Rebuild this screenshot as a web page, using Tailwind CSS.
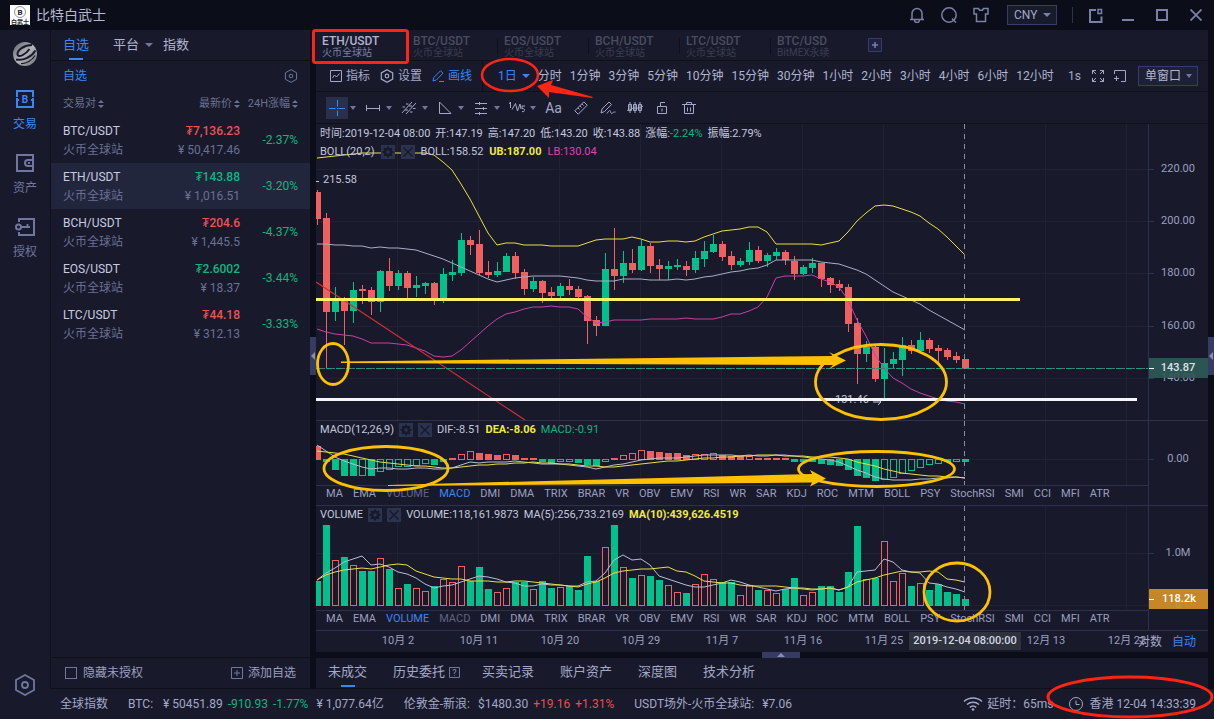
<!DOCTYPE html>
<html lang="zh-CN">
  <head>
    <meta charset="UTF-8" />
    <meta name="viewport" content="width=device-width, initial-scale=1.0" />
    <title>比特白武士</title>
    <script src="https://cdn.jsdelivr.net/npm/@tailwindcss/browser@4"></script>
  </head>
  <body class="relative flex flex-col h-screen overflow-hidden bg-[#0b0e19] text-[#a3a8c8] text-xs font-['Roboto','Noto_Sans_CJK_SC',sans-serif]">
    <header class="flex items-center h-[30px] shrink-0 pl-2.5 pr-3 text-[#7a80a6]">
      <svg class="w-5 h-5 bg-white" viewBox="0 0 20 20" fill="none" stroke="#33363f">
        <circle cx="10" cy="7" r="5.5" stroke="#8d93a0" />
        <text x="10" y="10" text-anchor="middle" font-size="8" font-weight="700" fill="#22252e" stroke="none">B</text>
        <text x="10" y="18.5" text-anchor="middle" font-size="6" font-weight="700" fill="#22252e" stroke="none">白武士</text>
      </svg>
      <h1 class="ml-1.5 text-sm leading-5 text-[#b4b8d2]">比特白武士</h1>
      <div class="flex items-center ml-auto">
        <button aria-label="通知" class="mr-4">
          <svg class="w-4 h-4" viewBox="0 0 16 16" fill="none" stroke="currentColor" stroke-width="1.5"><path d="M1 12.5h14M3 12V6.5a5 5 0 0 1 10 0V12M5.5 13a2.5 2.5 0 0 0 5 0" /></svg>
        </button>
        <button aria-label="客服" class="mr-4">
          <svg class="w-4 h-4" viewBox="0 0 16 16" fill="none" stroke="currentColor" stroke-width="1.5"><circle cx="8" cy="8" r="7.2" /><path d="M11 11.500l4 4" /></svg>
        </button>
        <button aria-label="皮肤" class="mr-[18px]">
          <svg class="w-4 h-4" viewBox="0 0 16 16" fill="none" stroke="currentColor" stroke-width="1.5"><path d="M1 1.500h4.500l1 1.700h3l1-1.700H15V7h-2.500v7.500h-9V7H1z" /></svg>
        </button>
        <div class="relative">
          <select aria-label="货币" class="appearance-none block w-[50px] h-5 pl-1.5 border border-[#363d6b] bg-[#171b2c] text-xs leading-[18px] text-[#a3a8c8]"><option>CNY</option></select>
          <svg class="absolute right-1.5 top-2 w-2 h-1 pointer-events-none" viewBox="0 0 8 4"><path d="M0 0h8L4 4z" fill="currentColor" /></svg>
        </div>
        <span class="w-px h-4 mx-[15px] bg-[#2b3150]"></span>
        <button aria-label="布局" class="mr-[19px]">
          <svg class="w-[15px] h-[15px]" viewBox="0 0 15 15" fill="none" stroke="currentColor" stroke-width="2"><path d="M8 2H2v12h11.500V8.500" /><path d="M10 1.500h3.500v4H10z" stroke-width="1.500" /></svg>
        </button>
        <button aria-label="最小化" class="mr-[22px]">
          <svg class="w-3 h-3" viewBox="0 0 12 12"><path d="M0 10h12v2H0z" fill="currentColor" /></svg>
        </button>
        <button aria-label="最大化" class="mr-[22px]">
          <svg class="w-3 h-3" viewBox="0 0 12 12" fill="none" stroke="currentColor" stroke-width="2"><path d="M1 1h10v10H1z" /></svg>
        </button>
        <button aria-label="关闭">
          <svg class="w-3 h-3" viewBox="0 0 12 12" fill="none" stroke="currentColor" stroke-width="1.800"><path d="M.5.500l11 11M11.500.500l-11 11" /></svg>
        </button>
      </div>
    </header>

    <div class="flex flex-1 min-h-0">
      <!-- left rail -->
      <nav class="flex flex-col items-center w-[50px] shrink-0 pt-3 pb-[23px] bg-[#181a2b] text-[#6f76a0]">
        <svg class="w-6 h-6 shrink-0" viewBox="0 0 24 24" fill="none" stroke="#181a2b">
          <defs><linearGradient id="ball" x1="0" y1="0" x2="1" y2="1"><stop offset="0" stop-color="#5d606a" /><stop offset=".5" stop-color="#b4b5ba" /><stop offset="1" stop-color="#6d7079" /></linearGradient></defs>
          <circle cx="12" cy="12" r="12" fill="url(#ball)" stroke="none" />
          <path d="M19 3C11 3 4 8 4.500 12.500c.5 3.500 8 .5 12-5.500" stroke-width="2" />
          <path d="M3 17.500c7 1.500 15-2 19.500-9" stroke-width="2" />
          <path d="M8 21.500c5 .5 11-3 14-8" stroke-width="1.200" />
        </svg>
        <a href="#" class="flex flex-col items-center mt-6 text-[#3c86f0]">
          <svg class="w-[18px] h-[18px]" viewBox="0 0 18 18" fill="none" stroke="currentColor" stroke-width="2"><path d="M1 7V1h16v6M1 11v6h16v-6M1 8v2h2M17 8v2h-2" /><text x="9" y="13" text-anchor="middle" font-size="10" font-weight="700" fill="currentColor" stroke="none">B</text></svg>
          <span class="mt-2 leading-4">交易</span>
        </a>
        <a href="#" class="flex flex-col items-center mt-[22px]">
          <svg class="w-[18px] h-[18px]" viewBox="0 0 18 18" fill="none" stroke="currentColor" stroke-width="2"><path d="M17 1H1v16h16zM17 6h-5a3 3 0 0 0 0 6h5" /><path d="M12 9h2" /></svg>
          <span class="mt-2 leading-4">资产</span>
        </a>
        <a href="#" class="flex flex-col items-center mt-[22px]">
          <svg class="w-5 h-[18px]" viewBox="0 0 20 18" fill="none" stroke="currentColor" stroke-width="2"><path d="M4 4V1h15v16H4v-3" /><circle cx="3.500" cy="9" r="2.500" /><path d="M6 9h9M12.500 9V6" stroke-width="1.800" /></svg>
          <span class="mt-2 leading-4">授权</span>
        </a>
        <button aria-label="设置" class="mt-auto">
          <svg class="w-5 h-[22px]" viewBox="0 0 20 22" fill="none" stroke="currentColor" stroke-width="1.800"><path d="M10 1l9 5v10l-9 5-9-5V6z" /><circle cx="10" cy="11" r="3" /></svg>
        </button>
      </nav>

      <div class="flex flex-col flex-1 min-w-0">
        <div class="flex flex-1 min-h-0">
          <!-- watchlist -->
          <aside class="flex flex-col w-[260px] shrink-0 bg-[#181a2b] border-l border-[#0e101c]">
            <nav class="flex h-[31px] shrink-0 pl-3 border-b border-[#0e101c] text-[13px] leading-[30px] text-[#b0b4d0]">
              <a href="#" class="relative text-[#3c86f0]">自选<span class="absolute left-1.5 bottom-0 w-3.5 h-0.5 bg-[#3c86f0]"></span></a>
              <a href="#" class="flex items-center ml-6">平台<svg class="ml-1.5 w-2 h-1" viewBox="0 0 8 4"><path d="M0 0h8L4 4z" fill="#6f76a0" /></svg></a>
              <a href="#" class="ml-2.5">指数</a>
            </nav>
            <div class="flex items-center justify-between h-7 shrink-0 px-3 pt-0.5">
              <h2 class="leading-4 text-[#3c86f0]">自选</h2>
              <button aria-label="自选设置" class="text-[#6f76a0]"><svg class="w-3.5 h-3.5" viewBox="0 0 14 14" fill="none" stroke="currentColor"><path d="M7 .6l5.600 3.200v6.400L7 13.400l-5.600-3.200V3.800z" /><circle cx="7" cy="7" r="1.800" /></svg></button>
            </div>
            <table class="w-full table-fixed text-[#6a7094]">
              <colgroup><col /><col class="w-[90px]" /><col class="w-[70px]" /></colgroup>
              <thead>
                <tr class="h-7 text-[11px] leading-4">
                  <th class="p-0 pt-0.5 pl-3 text-left font-normal"><button class="inline-flex items-center gap-0.5">交易对<svg class="w-1.5 h-2" viewBox="0 0 6 8" fill="currentColor"><path d="M0 3h6L3 0zM0 5h6L3 8z" /></svg></button></th>
                  <th class="p-0 pt-0.5 text-right font-normal"><button class="inline-flex items-center gap-0.5">最新价<svg class="w-1.5 h-2" viewBox="0 0 6 8" fill="currentColor"><path d="M0 3h6L3 0zM0 5h6L3 8z" /></svg></button></th>
                  <th class="p-0 pt-0.5 pr-3 text-right font-normal whitespace-nowrap"><button class="inline-flex items-center gap-0.5">24H涨幅<svg class="w-1.5 h-2" viewBox="0 0 6 8" fill="currentColor"><path d="M0 3h6L3 0zM0 5h6L3 8z" /></svg></button></th>
                </tr>
              </thead>
              <tbody id="watchlist"></tbody>
            </table>
            <div class="flex items-center justify-between h-8 shrink-0 mt-auto px-3.5 border-y border-[#0e101c] leading-4 text-[#9a9fc0]">
              <label class="flex items-center gap-1.5"><input type="checkbox" class="appearance-none w-3 h-3 border border-[#6f76a0]" />隐藏未授权</label>
              <button class="flex items-center gap-[5px]"><svg class="w-3 h-3" viewBox="0 0 12 12" fill="none" stroke="#6f76a0"><path d="M.5.500h11v11H.5zM3 6h6M6 3v6" /></svg>添加自选</button>
            </div>
          </aside>

          <div class="flex items-center w-1.5 shrink-0 pb-2">
            <button aria-label="收起自选" class="flex items-center justify-center w-1.5 h-[38px] bg-[#363b61]"><svg class="w-1 h-2" viewBox="0 0 4 8"><path d="M4 0v8L0 4z" fill="#8a8fb0" /></svg></button>
          </div>

          <main class="flex flex-col flex-1 min-w-0">
            <!-- market tabs -->
            <nav class="flex h-[31px] shrink-0 bg-[#181a2b] border-b border-[#0e101c] text-[#484c5f]" id="markets"></nav>

            <div class="flex items-center h-[31px] shrink-0 pl-3.5 pr-2.5 bg-[#181a2b] border-b border-[#0e101c] leading-4 whitespace-nowrap text-[#a3a8c8]">
              <button class="flex items-center gap-1"><svg class="w-3 h-3" viewBox="0 0 12 12" fill="none" stroke="currentColor"><path d="M.5.500h11v11H.5zM2.500 8l2-3 2 2 3-3.500" /></svg>指标</button>
              <button class="flex items-center gap-1 ml-2.5"><svg class="w-3.5 h-3.5" viewBox="0 0 14 14" fill="none" stroke="currentColor" stroke-width="1.200"><path d="M7 .7l5.700 3.200v6.200L7 13.300l-5.700-3.200V3.900z" /><circle cx="7" cy="7" r="1.800" /></svg>设置</button>
              <button class="flex items-center gap-1 ml-2.5 text-[#3c86f0]"><svg class="w-3 h-3" viewBox="0 0 12 12" fill="none" stroke="currentColor"><path d="M1 11l.8-3.500L8.500.8 11 3.200 4.300 10zM7 11.500h5" /></svg>画线</button>
              <span class="w-px h-[30px] ml-2.5 mr-[15px] bg-[#0e101c]"></span>
              <button class="flex items-center gap-[5px] mr-2 text-[#3c86f0]">1日<svg class="w-2 h-1" viewBox="0 0 8 4"><path d="M0 0h8L4 4z" fill="currentColor" /></svg></button>
              <div class="flex gap-2 text-[#b0b4d0]">
                <button>分时</button><button>1分钟</button><button>3分钟</button><button>5分钟</button><button>10分钟</button><button>15分钟</button><button>30分钟</button><button>1小时</button><button>2小时</button><button>3小时</button><button>4小时</button><button>6小时</button><button>12小时</button>
              </div>
              <span class="ml-auto">1s</span>
              <button aria-label="全屏" class="ml-[11px]"><svg class="w-3 h-3" viewBox="0 0 12 12" fill="none" stroke="currentColor"><path d="M.5 4V.5H4M.5.500l3.500 3.500M8 .5h3.500V4M11.500.500L8 4M.5 8v3.500H4M.5 11.500L4 8M11.500 8v3.500H8M11.500 11.500L8 8" /></svg></button>
              <button aria-label="新窗口" class="ml-2.5"><svg class="w-3 h-3" viewBox="0 0 12 12" fill="none" stroke="currentColor"><path d="M.5 4V.5h11v11H7M0 8.500h5M2.500 6v5" /></svg></button>
              <div class="relative ml-3">
                <select aria-label="窗口" class="appearance-none block w-[60px] h-5 pl-1.5 border border-[#363d6b] bg-[#1e2135] text-xs leading-[18px] text-[#b0b4d0]"><option>单窗口</option></select>
                <svg class="absolute right-1.5 top-2 w-1.5 h-1 pointer-events-none" viewBox="0 0 6 4"><path d="M0 0h6L3 4z" fill="#6f76a0" /></svg>
              </div>
            </div>

            <!-- drawing tools -->
            <div class="flex items-center h-8 shrink-0 pl-2.5 bg-[#181a2b] border-b border-[#0e101c] text-[#a3a8c8]">
              <div class="flex -mr-0.5" id="tools"></div>
              <button aria-label="文字" class="w-[27px] text-sm leading-5">Aa</button>
              <button aria-label="尺子" class="flex justify-center w-[27px]"><svg class="w-3.5 h-3.5" viewBox="0 0 14 14" fill="none" stroke="currentColor"><path d="M.8 9.800l9-9 3.400 3.400-9 9zM4 7l1.500 1.500M6 5l1.500 1.500M8 3l1.500 1.500" /></svg></button>
              <button aria-label="画笔" class="flex justify-center w-[27px]"><svg class="w-4 h-3.5" viewBox="0 0 16 14" fill="none" stroke="currentColor"><path d="M1 12l1-4 7-7 2.500 2.500-7 7zM7 12.500c2-3 3-4 3.500-2s1 2.500 2 1.500 1.500-1 3-1" /></svg></button>
              <button aria-label="K线样式" class="flex justify-center w-[27px]"><svg class="w-4 h-3.5" viewBox="0 0 16 14" fill="none" stroke="currentColor"><path d="M1.500 3.500h3v6h-3zM6.500 3.500h3v6h-3zM11.500 3.500h3v6h-3zM3 1v11M8 1v11M13 1v11M0 9c2 2 4-2 7-2s5 1 9-2" /></svg></button>
              <button aria-label="锁定" class="flex justify-center w-[27px]"><svg class="w-2.5 h-3" viewBox="0 0 10 12" fill="none" stroke="currentColor"><path d="M.5 4.500h9v7h-9zM3.500 4.500v-4H8M5 6.500v3" /></svg></button>
              <button aria-label="删除" class="flex justify-center w-[27px]"><svg class="w-3.5 h-3" viewBox="0 0 14 12" fill="none" stroke="currentColor"><path d="M0 2.500h14M4.500 2.500v-2h5v2M2.500 3v8.500h9V3M5.500 5.500v4M8.500 5.500v4" /></svg></button>
            </div>

            <!-- charts -->
            <section class="flex flex-col flex-1 min-h-0 bg-[#181a2b] text-[11px]">
              <div class="flex flex-1 min-h-0">
                <div class="relative flex-1 min-w-0 overflow-hidden">
                  <svg id="priceChart" class="block w-full h-full"></svg>
                  <div class="absolute top-0.5 left-1 flex gap-[5px] leading-4 whitespace-nowrap text-[#c3c7de]">
                    <span>时间:2019-12-04 08:00</span><span>开:147.19</span><span>高:147.20</span><span>低:143.20</span><span>收:143.88</span><span>涨幅:<span class="text-[#10b57f]">-2.24%</span></span><span>振幅:2.79%</span>
                  </div>
                  <div class="absolute top-5 left-1 flex items-center gap-1.5 leading-4 whitespace-nowrap text-[#c3c7de]" data-legend>
                    <span>BOLL(20,2)</span>
                    <span>BOLL:158.52</span><span class="font-bold text-[#f2ea3a]">UB:187.00</span><span class="text-[#d946b4]">LB:130.04</span>
                  </div>
                </div>
                <svg id="priceAxis" class="block w-[60px] h-full border-l border-[#2c3150]"></svg>
              </div>
              <div class="flex h-[65px] shrink-0 border-t border-[#2c3150]">
                <div class="relative flex-1 min-w-0 overflow-hidden">
                  <svg id="macdChart" class="block w-full h-full"></svg>
                  <div class="absolute top-px left-1 flex items-center gap-[5px] leading-4 whitespace-nowrap text-[#c3c7de]" data-legend>
                    <span>MACD(12,26,9)</span>
                    <span>DIF:-8.51</span><span class="font-bold text-[#f2ea3a]">DEA:-8.06</span><span class="text-[#10b57f]">MACD:-0.91</span>
                  </div>
                </div>
                <svg id="macdAxis" class="block w-[60px] h-full border-l border-[#2c3150]"></svg>
              </div>
              <div class="flex h-5 shrink-0">
                <nav class="flex items-start flex-1 gap-2.5 pl-2.5 border-t border-[#2c3150] leading-4 text-[#9a9fc0]" data-tabs="MACD"></nav>
                <div class="w-[60px] border-l border-[#2c3150]"></div>
              </div>
              <div class="flex h-[105px] shrink-0 border-t border-[#2c3150]">
                <div class="relative flex-1 min-w-0 overflow-hidden">
                  <svg id="volumeChart" class="block w-full h-full"></svg>
                  <div class="absolute top-px left-1 flex items-center gap-[5px] leading-4 whitespace-nowrap text-[#c3c7de]" data-legend>
                    <span>VOLUME</span>
                    <span>VOLUME:118,161.9873</span><span>MA(5):256,733.2169</span><span class="font-bold text-[#f2ea3a]">MA(10):439,626.4519</span>
                  </div>
                </div>
                <svg id="volumeAxis" class="block w-[60px] h-full border-l border-[#2c3150]"></svg>
              </div>
              <div class="flex h-5 shrink-0">
                <nav class="flex items-start flex-1 gap-2.5 pl-2.5 border-t border-[#2c3150] leading-4 text-[#9a9fc0]" data-tabs="VOLUME"></nav>
                <div class="w-[60px] border-l border-[#2c3150]"></div>
              </div>
              <div class="flex h-[22px] shrink-0 border-t border-[#2c3150]">
                <svg id="dateAxis" class="block flex-1 min-w-0 h-full overflow-visible"></svg>
                <div class="flex justify-between w-[70px] pr-3 text-xs leading-[22px]"><button>对数</button><button class="text-[#3c86f0]">自动</button></div>
              </div>
            </section>

            <div class="flex justify-center h-1.5 shrink-0 pl-[38px]">
              <button aria-label="展开" class="flex items-center justify-center w-[38px] h-1.5 bg-[#363b61]"><svg class="w-2 h-1" viewBox="0 0 8 4"><path d="M0 4h8L4 0z" fill="#8a8fb0" /></svg></button>
            </div>
            <nav class="flex gap-[26px] h-[31px] shrink-0 pl-3 bg-[#181a2b] border-b border-[#0e101c] text-[13px] leading-7 text-[#a3a8c8]">
              <a href="#" class="relative">未成交<span class="absolute left-[13px] bottom-px w-3.5 h-0.5 bg-[#3c86f0]"></span></a>
              <a href="#" class="flex items-center gap-1 h-7 -mr-1">历史委托<svg class="w-[11px] h-[11px]" viewBox="0 0 11 11" fill="none" stroke="#6f76a0"><path d="M.5.500h10v10H.5z" /><text x="5.500" y="9" text-anchor="middle" font-size="9" fill="#8a8fb0" stroke="none">?</text></svg></a>
              <a href="#">买卖记录</a>
              <a href="#">账户资产</a>
              <a href="#">深度图</a>
              <a href="#">技术分析</a>
            </nav>
          </main>

          <div class="flex items-center w-1.5 shrink-0 pb-2">
            <button aria-label="展开侧栏" class="flex items-center justify-center w-1.5 h-[38px] bg-[#363b61]"><svg class="w-1 h-2" viewBox="0 0 4 8"><path d="M4 0v8L0 4z" fill="#8a8fb0" /></svg></button>
          </div>
        </div>

        <footer class="flex items-center h-[30px] shrink-0 pl-2.5 pr-[18px] bg-[#181a2b] leading-4 whitespace-nowrap">
          <span class="mr-5">全球指数</span>
          <span class="mr-2.5">BTC:</span>
          <span class="mr-[5px]">¥ 50451.89</span>
          <span class="mr-[5px] text-[#10b57f]">-910.93</span>
          <span class="mr-2 text-[#10b57f]">-1.77%</span>
          <span class="mr-5">¥ 1,077.64亿</span>
          <span class="mr-2">伦敦金-新浪:</span>
          <span class="mr-[5px]">$1480.30</span>
          <span class="mr-[5px] text-[#e0524f]">+19.16</span>
          <span class="mr-5 text-[#e0524f]">+1.31%</span>
          <span class="mr-2">USDT场外-火币全球站:</span>
          <span>¥7.06</span>
          <svg class="ml-auto w-5 h-3.5" viewBox="0 0 20 14" fill="none" stroke="currentColor" stroke-width="1.500"><path d="M1 4.500a13.500 13.500 0 0 1 18 0M4 7.500a9 9 0 0 1 12 0M6.800 10.300a5 5 0 0 1 6.400 0" /><circle cx="10" cy="12.500" r="1.300" fill="currentColor" stroke="none" /></svg>
          <span class="ml-1">延时：65ms</span>
          <svg class="ml-4 mr-1.5 w-3.5 h-3.5" viewBox="0 0 14 14" fill="none" stroke="currentColor"><circle cx="7" cy="7" r="6.500" /><path d="M7 3.500v4h3.500" /></svg>
          <span>香港 12-04 14:33:39</span>
        </footer>
      </div>
    </div>

    <!-- hand-drawn marks over the page -->
    <svg class="absolute inset-0 w-full h-full pointer-events-none" fill="none" stroke-width="3">
      <g stroke="#ff2414">
        <rect x="313.500" y="30.500" width="94" height="32" rx="2" />
        <ellipse cx="510" cy="75" rx="28" ry="16" stroke-width="2.500" />
        <ellipse cx="1130" cy="697" rx="82" ry="20" />
        <path d="M537 86l16-6-2 5 42 12-1 1-43-6v6z" fill="#ff2414" stroke="none" />
      </g>
      <g stroke="#ffc000" stroke-width="2.800">
        <ellipse cx="333" cy="364" rx="15.500" ry="20.500" />
        <ellipse cx="881" cy="382" rx="65.500" ry="37.500" />
        <ellipse cx="386" cy="468.500" rx="62" ry="22" />
        <ellipse cx="876.500" cy="469" rx="78" ry="17.500" />
        <ellipse cx="957" cy="592" rx="33" ry="29" />
      </g>
      <g fill="#ffc000">
        <path d="M341 361.500L833 356l-4-4 17 8.500-17 8.500 4-4-492-2z" />
        <path d="M388 485l424-11-2-4 16 8.500-16 8 2-4-424 3.500z" />
      </g>
    </svg>

    <script>
      const UP = "#00c08b";
      const DOWN = "#ee6160";
      const STEP = 9;

      const watchlist = [
        ["BTC/USDT", "7,136.23", "50,417.46", "-2.37%", false],
        ["ETH/USDT", "143.88", "1,016.51", "-3.20%", true],
        ["BCH/USDT", "204.6", "1,445.5", "-4.37%", false],
        ["EOS/USDT", "2.6002", "18.37", "-3.44%", true],
        ["LTC/USDT", "44.18", "312.13", "-3.33%", false],
      ];
      document.getElementById("watchlist").innerHTML = watchlist.map(([pair, price, cny, change, up], i) => `
        <tr class="h-[46px] leading-[19px] ${i === 1 ? "bg-[#22263d]" : ""}">
          <td class="p-0 pt-0.5 pl-3"><div class="text-[#c8cbe0]">${pair}</div><div>火币全球站</div></td>
          <td class="p-0 pt-0.5 text-right whitespace-nowrap"><div class="font-medium ${up ? "text-[#10b57f]" : "text-[#ea5455]"}">₮${price}</div><div>¥ ${cny}</div></td>
          <td class="p-0 pr-3 text-right text-[#10b57f]">${change}</td>
        </tr>`).join("");

      const markets = [["ETH/USDT", "火币全球站"], ["BTC/USDT", "火币全球站"], ["EOS/USDT", "火币全球站"], ["BCH/USDT", "火币全球站"], ["LTC/USDT", "火币全球站"], ["BTC/USD", "BitMEX永续"]];
      document.getElementById("markets").innerHTML = markets.map(([pair, site], i) => `
        <a href="#" class="flex w-[91px] pt-1 pl-1.5 ${i === 0 ? "text-[#b0b4d0]" : ""}">
          <span class="flex-1"><span class="block leading-[14px] font-medium">${pair}</span><span class="block text-[10px] leading-[10px] ${i === 0 ? "text-[#7a80a6]" : "text-[#3a3e50]"}">${site}</span></span>
          <span class="w-px h-4 mt-1 ${i > 0 && i < 5 ? "bg-[#0e101c]" : ""}"></span>
        </a>`).join("") + `
        <button aria-label="添加" class="self-center ml-1.5"><svg class="w-3.5 h-3.5" viewBox="0 0 14 14"><path d="M.5.500h13v13H.5z" fill="#1e2240" stroke="#363d6b" /><path d="M4 7h6M7 4v6" stroke="#7a80a6" stroke-width="1.500" /></svg></button>`;

      const tools = [
        ["十字线", "M0 8.500h6.500M9.500 8.500h6.500M8.500 0v6.500M8.500 10.500v6.500M8 8.500h1"],
        ["线段", "M1.500 5v6M14.500 5v6M1 8.500h14"],
        ["通道", "M1 13L11 2M5 14L15 3M1.500 7h2.500M5 4h2.500M9 12h2.500M12 8.500h2.500M4 10h3M8 6h3"],
        ["图形", "M2.500 2v11.500h11.500z"],
        ["水平线", "M2 3.500h12M2 8.500h12M2 13.500h12M6.500 2v3M10.500 7v3M6.500 12v3"],
        ["波浪", "M0 4l1.500-2v6M3 9.500l3.500-6 2 7.500 2.500-7 1 5M16 6h-3v2.500c3.500-.5 3.500 4 0 3"],
      ];
      document.getElementById("tools").innerHTML = tools.map(([name, d], i) => `
        <button aria-label="${name}" class="flex items-center w-9">
          <span class="flex items-center justify-center w-[22px] h-[22px] ${i === 0 ? "bg-[#28304b] text-[#3c86f0]" : ""}"><svg class="w-4 h-4" viewBox="0 0 16 16" fill="none" stroke="currentColor"><path d="${d}" /></svg></span>
          <svg class="ml-0.5 w-1.5 h-1" viewBox="0 0 6 4"><path d="M0 0h6L3 4z" fill="#6f76a0" /></svg>
        </button>`).join("");

      const indicators = ["MA", "EMA", "VOLUME", "MACD", "DMI", "DMA", "TRIX", "BRAR", "VR", "OBV", "EMV", "RSI", "WR", "SAR", "KDJ", "ROC", "MTM", "BOLL", "PSY", "StochRSI", "SMI", "CCI", "MFI", "ATR"];
      document.querySelectorAll("[data-tabs]").forEach((nav) => {
        const used = ["VOLUME", "MACD"];
        nav.innerHTML = indicators.map((name) => {
          const color = name === nav.dataset.tabs ? "text-[#3c86f0]" : used.includes(name) ? "text-[#5f6484]" : "";
          return `<button class="${color}">${name}</button>`;
        }).join("");
      });

      // gear and close buttons after each legend title
      document.querySelectorAll("[data-legend]").forEach((legend) => {
        legend.firstElementChild.insertAdjacentHTML("afterend", `
          <button aria-label="参数" class="w-3.5 h-3.5 bg-[#2a3350]"><svg class="w-3.5 h-3.5" viewBox="0 0 14 14" fill="none" stroke="#181a2b"><circle cx="7" cy="7" r="3" stroke-width="2.500" /><path d="M7 1.500v2M7 10.500v2M1.500 7h2M10.500 7h2M3.100 3.100l1.400 1.400M9.500 9.500l1.400 1.400M3.100 10.900l1.400-1.400M9.500 4.500l1.400-1.400" stroke-width="2" /></svg></button>
          <button aria-label="关闭指标" class="w-3.5 h-3.5 bg-[#2a3350]"><svg class="w-3.5 h-3.5" viewBox="0 0 14 14" fill="none" stroke="#181a2b" stroke-width="1.500"><path d="M2.500 2.500l9 9M11.500 2.500l-9 9" /></svg></button>`);
      });

      // high, body top, body bottom, low (all in px), rising
      const candles = [
        [66,68,95,101,0],[89,94,188,244,0],[163,176,188,197,1],[173,176,187,221,0],[158,166,187,199,1],[161,165,167,180,0],
        [163,166,178,191,0],[146,147,178,188,1],[134,147,162,167,0],[146,149,162,166,1],[147,149,164,175,0],[152,161,164,173,1],
        [158,159,162,170,1],[158,159,175,181,0],[144,150,175,179,1],[136,148,151,157,1],[109,116,149,152,1],[112,116,121,131,0],
        [106,120,149,151,0],[137,148,151,154,0],[138,147,151,153,1],[129,132,148,148,1],[128,132,149,155,0],[145,148,165,171,0],
        [153,157,165,168,1],[156,157,169,179,0],[163,168,172,175,0],[159,162,172,177,1],[155,162,166,171,0],[162,165,173,175,0],
        [171,172,197,220,0],[192,196,202,212,0],[129,145,202,202,1],[104,145,152,166,0],[127,139,152,159,1],[125,139,146,149,0],
        [116,122,146,147,1],[119,122,142,149,0],[135,141,145,156,0],[137,142,145,156,1],[135,141,143,146,1],[137,142,146,152,0],
        [127,134,146,149,1],[117,127,135,143,1],[111,120,128,129,1],[117,120,133,137,0],[127,132,141,146,0],[134,137,141,143,1],
        [118,126,138,141,1],[122,126,137,139,0],[129,131,137,143,1],[124,128,132,136,1],[126,128,136,141,0],[132,137,150,156,0],
        [141,143,150,151,1],[134,139,144,149,1],[139,139,155,163,0],[153,154,161,169,0],[156,160,164,167,0],[160,163,200,208,0],
        [194,199,230,260,0],[217,223,230,238,1],[222,223,255,258,0],[224,239,255,274,1],[228,235,240,244,1],[213,221,236,252,1],
        [216,221,227,230,0],[208,216,227,227,1],[214,216,225,229,0],[221,224,227,239,0],[224,226,233,236,0],[228,232,236,239,0],
        [235,235,244,245,0],
      ];
      const upper = [34,33,32,31,30,29,29,29,29,29,29,29,29,31,38,46,60,75,92,109,121,119,119,121,121,121,122,122,122,122,119,116,115,115,115,113,115,118,118,117,117,118,117,113,110,107,106,105,103,103,108,120,120,120,120,120,121,119,117,108,97,89,82,81,82,85,88,92,99,105,113,122,131];
      const middle = [120,120,121,121,122,122,124,123,124,124,125,126,129,132,135,139,143,147,151,155,158,156,154,153,152,152,152,152,153,154,156,157,157,157,155,155,155,156,156,156,155,156,155,153,152,150,148,147,145,144,141,136,136,136,136,136,138,139,140,143,146,150,156,162,168,172,176,180,186,191,196,201,206];
      const lower = [205,208,210,211,212,215,219,219,219,220,221,224,227,232,233,232,226,218,210,202,195,190,188,185,183,183,182,183,183,185,193,199,198,196,196,196,196,195,195,195,195,194,195,195,195,193,190,190,187,183,173,154,152,152,152,151,155,158,163,176,196,212,231,244,254,259,265,269,272,275,277,278,280];

      // positive is red, negative is green; "h" marks hollow bars
      const macd = "14 -3 -11 -17 -17 -17h -17 -13h -11h -8h -8h -7h -5h -6 -3 2 6h 9h 7 6 5 6h 5 2 2 -3 -5 -3h -3h -4 -6 -7 -3h 2 5h 7h 10h 9 8 7 7 5 6h 6h 7h 5 4 4 4h 2 2 2 2 -3 -3 -3 -5 -6 -7 -11 -17 -19 -22 -21h -19h -15h -12h -9h -6h -5h -3 -3h -3".split(" ");
      const dif = [24,30,36,40,43,46,48,47,47,48,48,47,47,48,48,47,44,41,42,41,41,41,40,41,42,43,43,43,44,45,46,48,46,44,43,41,39,38,37,37,37,36,35,34,34,34,34,35,34,35,35,34,34,35,36,37,38,39,41,45,49,52,56,58,59,59,59,58,58,57,57,56,57];
      const dea = [30,31,32,33,35,37,39,41,42,43,44,45,45,46,47,47,46,45,44,44,43,43,42,42,41,42,42,43,43,44,45,45,46,46,45,44,43,42,41,40,40,39,38,37,37,36,36,35,35,34,34,34,35,35,35,36,36,36,37,38,41,43,45,48,50,52,53,54,55,55,56,56,57];

      const volume = "25g 81g 46r 49g 41r 35g 35g 48r 37g 18r 22g 18r 15r 20g 27r 24r 40r 25g 39g 17g 14r 18r 24g 24g 17r 25g 18g 19r 20g 16g 50g 25g 59r 81g 39r 28g 31r 30g 26g 21r 14r 13g 22r 32r 27r 24g 24g 11r 21r 16g 16r 13r 17g 28g 11r 14r 20g 20g 14g 34g 80g 27r 28g 65r 25r 33r 20g 23r 16g 22g 14g 12g 7g".split(" ");
      const ma5 = [74,67,62,56,53,50,59,58,61,66,68,72,78,82,80,79,76,73,70,71,73,76,77,80,80,78,79,79,80,80,76,75,67,54,49,54,53,59,70,73,76,79,81,81,79,77,74,76,79,81,83,85,83,82,83,84,83,82,84,81,66,65,64,53,56,64,66,67,77,78,81,83,86];
      const ma10 = [74,69,66,64,63,62,63,61,59,58,59,65,68,71,72,73,73,75,75,75,76,76,75,75,76,77,78,79,80,81,78,76,72,67,65,64,63,63,62,61,65,66,70,75,76,77,77,79,80,80,80,80,81,82,82,83,83,82,84,81,76,74,72,69,67,65,66,66,65,66,73,74,76];

      const box = (i, y, h, color, hollow) => hollow
        ? `<rect x="${i * STEP - 1.5}" y="${y + 0.5}" width="6" height="${h - 1}" fill="#181a2b" stroke="${color}"/>`
        : `<rect x="${i * STEP - 2}" y="${y}" width="7" height="${h}" fill="${color}"/>`;
      const curve = (ys, color) => `<polyline points="${ys.map((y, i) => `${i * STEP + 1},${y}`).join(" ")}" fill="none" stroke="${color}"/>`;
      const grid = (rows) => {
        let out = "";
        for (let k = 0; k < 10; k++) out += `<line x1="${81.5 + 81 * k}" x2="${81.5 + 81 * k}" y1="0" y2="100%" stroke="#1f2235"/>`;
        rows.forEach((y) => { out += `<line x1="0" x2="100%" y1="${y}" y2="${y}" stroke="#1f2235"/>`; });
        return out;
      };
      const cross = `<line x1="648.5" x2="648.5" y1="0" y2="100%" stroke="#8a8da0" stroke-dasharray="5 5"/>`;
      const label = (y, text) => `<line x1="0" x2="5" y1="${y}" y2="${y}" stroke="#2c3150"/><text x="29" y="${y + 2}" text-anchor="middle" fill="#9a9fc0">${text}</text>`;

      document.getElementById("priceChart").innerHTML = grid([45.5, 97.5, 149.5, 202.5, 254.5]) +
        candles.map(([hi, top, bottom, lo, up], i) => `<rect x="${i * STEP + 1}" y="${hi}" width="1" height="${lo - hi}" fill="${up ? UP : DOWN}"/>` + box(i, top, bottom - top, up ? UP : DOWN)).join("") +
        curve(upper, "#e8e03a") + curve(middle, "#a9adc6") + curve(lower, "#c63fa8") +
        `<path d="M-4 57.500h7M0 55l-3 2.500 3 2.500" stroke="#c3c7de" fill="none"/><text x="7" y="59" fill="#c3c7de">215.58</text>
        <text x="519" y="279" fill="#c3c7de">131.46</text><path d="M557 278h8M562 275l3 3-3 3" stroke="#c3c7de" fill="none"/>
        <line x1="0" y1="158" x2="209" y2="296" stroke="#d32f34" stroke-width="1.200"/>
        <line x1="0" x2="100%" y1="244.500" y2="244.500" stroke="#12a57c" stroke-dasharray="5 5"/><line x1="0" x2="100%" y1="244.500" y2="244.500" stroke="#5f6b78" stroke-dasharray="4 6" stroke-dashoffset="-5"/>
        ${cross}
        <rect x="0" y="174" width="704" height="3" fill="#fff263"/><rect x="0" y="274" width="821" height="3" fill="#f5f5f7"/>`;
      document.getElementById("priceAxis").innerHTML = label(45.5, "220.00") + label(97.5, "200.00") + label(149.5, "180.00") + label(202.5, "160.00") + label(254.5, "140.00") +
        `<rect x="0" y="234" width="60" height="20" fill="#2f5b56" fill-opacity=".9"/><path d="M0 244.500h5" stroke="#fff"/><text x="29" y="247" text-anchor="middle" fill="#dfe2ee" font-weight="500">143.87</text>`;

      document.getElementById("macdChart").innerHTML = grid([38.5]) +
        macd.map((v, i) => {
          const n = parseInt(v);
          return box(i, n > 0 ? 39 - n : 38, Math.abs(n), n > 0 ? DOWN : UP, v.endsWith("h"));
        }).join("") + curve(dif, "#b9bcd2") + curve(dea, "#e8e03a") + cross;
      document.getElementById("macdAxis").innerHTML = label(38.5, "0.00");

      document.getElementById("volumeChart").innerHTML = grid([47.5, 99.5]) +
        volume.map((v, i) => box(i, 100 - parseInt(v), parseInt(v), v.endsWith("g") ? UP : DOWN, v.endsWith("r"))).join("") +
        curve(ma5, "#b9bcd2") + curve(ma10, "#e8e03a") + cross;
      document.getElementById("volumeAxis").innerHTML = label(47.5, "1.0M") + label(99.5, "0") +
        `<rect x="0" y="83" width="59" height="20" fill="#d89327" fill-opacity=".9"/><path d="M0 93.500h5" stroke="#fff"/><text x="30" y="96" text-anchor="middle" fill="#fff" font-weight="500">118.2k</text>`;

      const dates = ["10月 2", "10月 11", "10月 20", "10月 29", "11月 7", "11月 16", "11月 25", "", "12月 13", "12月 22"];
      document.getElementById("dateAxis").innerHTML = dates.map((text, k) => `<text x="${82 + 81 * k}" y="13" text-anchor="middle" fill="#9a9fc0">${text}</text>`).join("") +
        `<rect x="593" y="1" width="112" height="18" fill="#2e323c"/><text x="649" y="13" text-anchor="middle" fill="#d3d6e6" font-weight="500">2019-12-04 08:00:00</text>`;
    </script>
  </body>
</html>
